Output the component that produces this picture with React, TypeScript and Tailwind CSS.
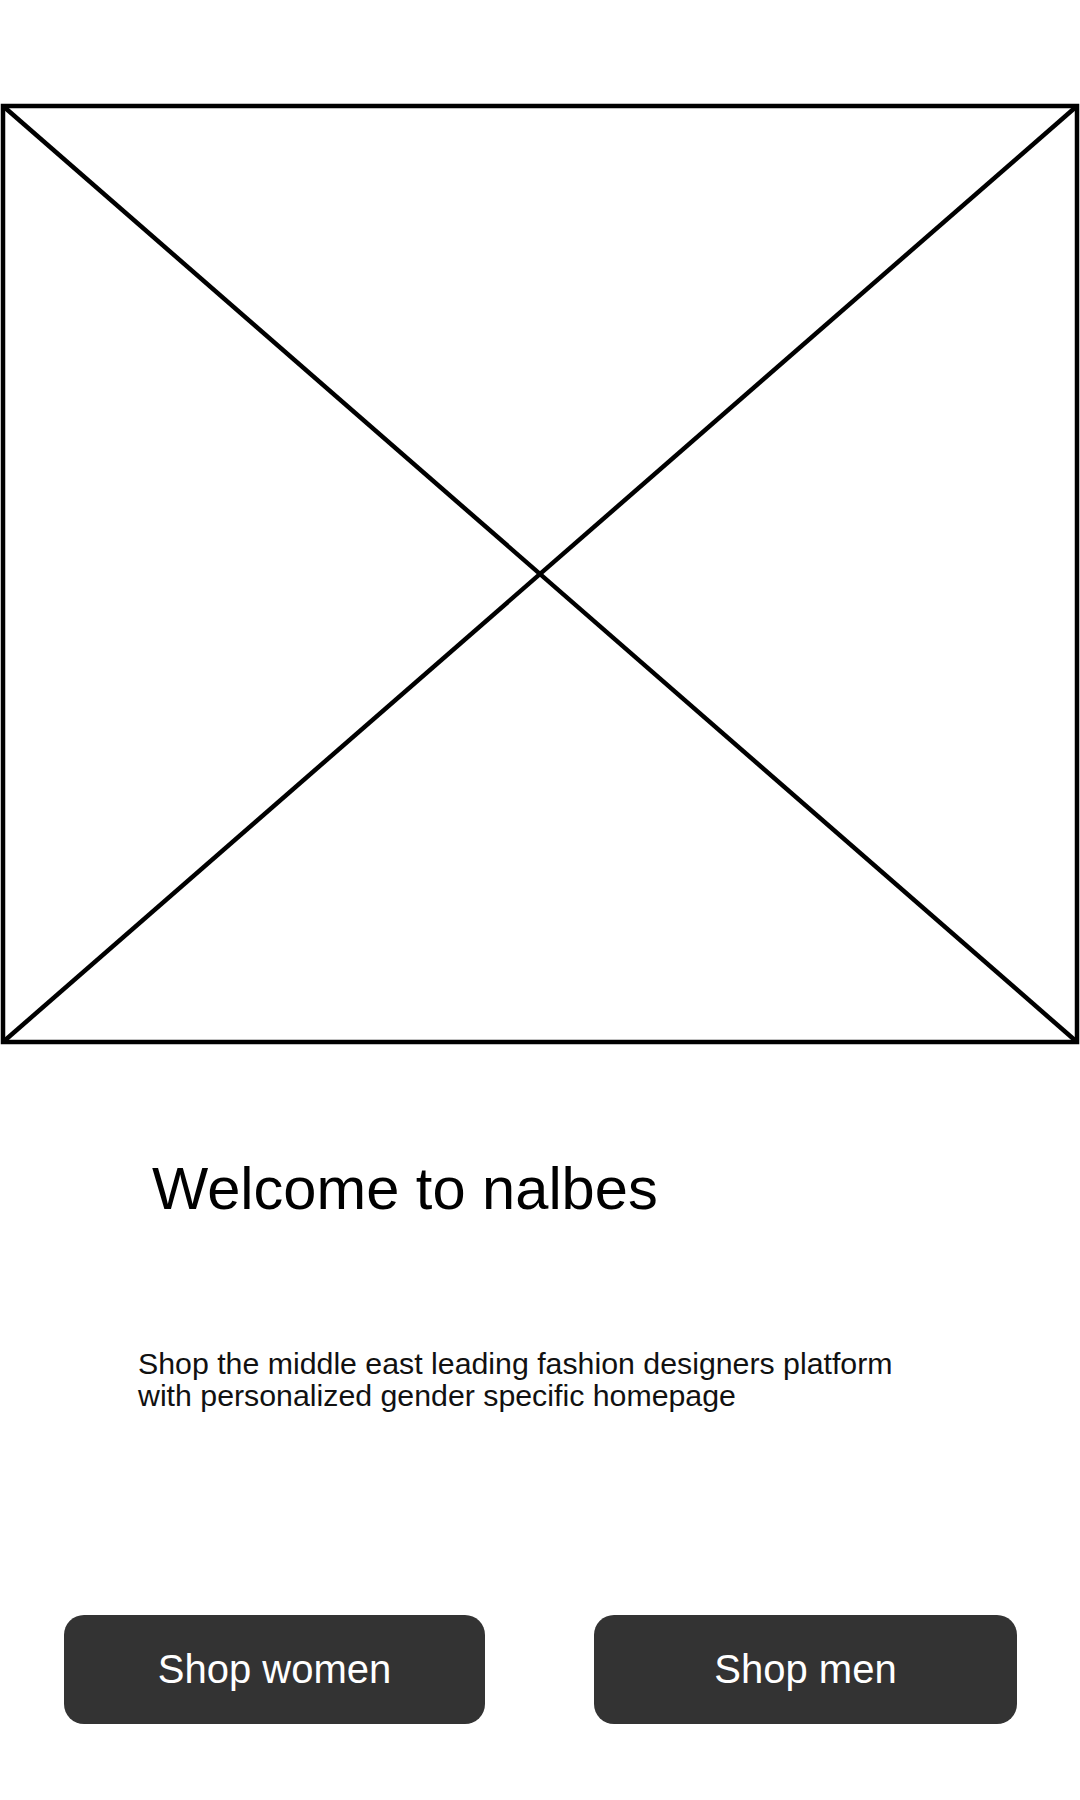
import React from "react";

const Placeholder: React.FC = () => (
    <svg className="block w-full h-[944px]" viewBox="0 0 1080 944" fill="none">
        <g stroke="#000" strokeWidth={4.5}>
            <rect x={3} y={4} width={1074} height={936} />
            <line x1={3} y1={4} x2={1077} y2={940} />
            <line x1={1077} y1={4} x2={3} y2={940} />
        </g>
    </svg>
);

const ShopButton: React.FC<{ label: string; width: string }> = ({ label, width }) => (
    <button
        className={`${width} h-[109px] rounded-[20px] bg-[#333333] text-white text-[40px] leading-none flex items-center justify-center`}
    >
        {label}
    </button>
);

export default function App() {
    return (
        <div className="w-[1080px] h-[1800px] bg-white text-black font-['Liberation_Sans',Arial,sans-serif] pt-[102px]">
            <Placeholder />

            <h1 className="mt-[113px] pl-[152px] text-[59.6px] leading-none font-normal">
                Welcome to nalbes
            </h1>

            <p className="mt-[129px] pl-[138px] text-[30.3px] leading-[32px] text-[#111]">
                Shop the middle east leading fashion designers platform
                <br />
                with personalized gender specific homepage
            </p>

            <div className="mt-[203px] pl-[64px] flex gap-[109px]">
                <ShopButton label="Shop women" width="w-[421px]" />
                <ShopButton label="Shop men" width="w-[423px]" />
            </div>
        </div>
    );
}
